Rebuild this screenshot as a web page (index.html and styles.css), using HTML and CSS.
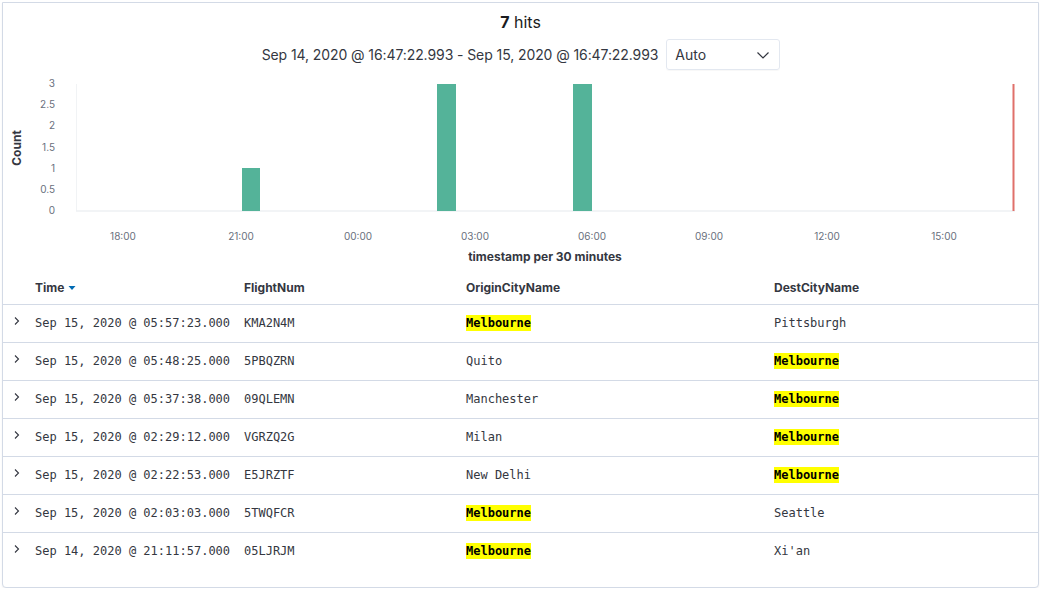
FILE: index.html
```html
<!DOCTYPE html>
<html>
<head>
<meta charset="utf-8">
<link rel="stylesheet" href="styles.css">
</head>
<body>
<div class="panel">
  <div class="hits"><strong>7</strong> hits</div>
  <div class="range">
    <span class="range-text">Sep 14, 2020 @ 16:47:22.993 - Sep 15, 2020 @ 16:47:22.993</span>
    <div class="select">
      <span>Auto</span>
      <svg class="caret" width="14" height="10" viewBox="0 0 14 10"><path d="M1.5 2.5 L7 8 L12.5 2.5" fill="none" stroke="#343741" stroke-width="1.2"/></svg>
    </div>
  </div>
  <svg class="chart" width="1035" height="198" viewBox="3 70 1035 198">
    <text class="ylabel" x="55" y="87">3</text>
    <text class="ylabel" x="55" y="108">2.5</text>
    <text class="ylabel" x="55" y="129">2</text>
    <text class="ylabel" x="55" y="151">1.5</text>
    <text class="ylabel" x="55" y="172">1</text>
    <text class="ylabel" x="55" y="193">0.5</text>
    <text class="ylabel" x="55" y="214">0</text>
    <text class="ytitle" transform="translate(21 148) rotate(-90)">Count</text>
    <line x1="76.5" y1="84" x2="76.5" y2="211" stroke="#F1F3F5" stroke-width="1"/>
    <line x1="76" y1="211" x2="1015" y2="211" stroke="#EEF0F3" stroke-width="1.5"/>
    <rect x="242" y="168" width="18" height="43" fill="#54B399"/>
    <rect x="437" y="84" width="19" height="127" fill="#54B399"/>
    <rect x="573" y="84" width="19" height="127" fill="#54B399"/>
    <line x1="1013.5" y1="84" x2="1013.5" y2="211" stroke="#E0706A" stroke-width="2"/>
    <text class="xlabel" x="123" y="240">18:00</text>
    <text class="xlabel" x="241" y="240">21:00</text>
    <text class="xlabel" x="358" y="240">00:00</text>
    <text class="xlabel" x="475" y="240">03:00</text>
    <text class="xlabel" x="592" y="240">06:00</text>
    <text class="xlabel" x="709" y="240">09:00</text>
    <text class="xlabel" x="827" y="240">12:00</text>
    <text class="xlabel" x="944" y="240">15:00</text>
    <text class="xtitle" x="545" y="261">timestamp per 30 minutes</text>
  </svg>
  <table class="docs">
    <thead>
      <tr>
        <th class="c-exp"></th>
        <th class="c-time">Time <svg class="sort" width="8" height="6" viewBox="0 0 8 6"><path d="M0.5 1 L7.5 1 L4 5 Z" fill="#006BB4"/></svg></th>
        <th class="c-flight">FlightNum</th>
        <th class="c-origin">OriginCityName</th>
        <th class="c-dest">DestCityName</th>
      </tr>
    </thead>
    <tbody>
      <tr><td class="c-exp"><svg class="chev" width="8" height="10" viewBox="0 0 8 10"><path d="M2 1.5 L5.5 5 L2 8.5" fill="none" stroke="#343741" stroke-width="1.1"/></svg></td><td>Sep 15, 2020 @ 05:57:23.000</td><td>KMA2N4M</td><td><mark>Melbourne</mark></td><td>Pittsburgh</td></tr>
      <tr><td class="c-exp"><svg class="chev" width="8" height="10" viewBox="0 0 8 10"><path d="M2 1.5 L5.5 5 L2 8.5" fill="none" stroke="#343741" stroke-width="1.1"/></svg></td><td>Sep 15, 2020 @ 05:48:25.000</td><td>5PBQZRN</td><td>Quito</td><td><mark>Melbourne</mark></td></tr>
      <tr><td class="c-exp"><svg class="chev" width="8" height="10" viewBox="0 0 8 10"><path d="M2 1.5 L5.5 5 L2 8.5" fill="none" stroke="#343741" stroke-width="1.1"/></svg></td><td>Sep 15, 2020 @ 05:37:38.000</td><td>09QLEMN</td><td>Manchester</td><td><mark>Melbourne</mark></td></tr>
      <tr><td class="c-exp"><svg class="chev" width="8" height="10" viewBox="0 0 8 10"><path d="M2 1.5 L5.5 5 L2 8.5" fill="none" stroke="#343741" stroke-width="1.1"/></svg></td><td>Sep 15, 2020 @ 02:29:12.000</td><td>VGRZQ2G</td><td>Milan</td><td><mark>Melbourne</mark></td></tr>
      <tr><td class="c-exp"><svg class="chev" width="8" height="10" viewBox="0 0 8 10"><path d="M2 1.5 L5.5 5 L2 8.5" fill="none" stroke="#343741" stroke-width="1.1"/></svg></td><td>Sep 15, 2020 @ 02:22:53.000</td><td>E5JRZTF</td><td>New Delhi</td><td><mark>Melbourne</mark></td></tr>
      <tr><td class="c-exp"><svg class="chev" width="8" height="10" viewBox="0 0 8 10"><path d="M2 1.5 L5.5 5 L2 8.5" fill="none" stroke="#343741" stroke-width="1.1"/></svg></td><td>Sep 15, 2020 @ 02:03:03.000</td><td>5TWQFCR</td><td><mark>Melbourne</mark></td><td>Seattle</td></tr>
      <tr class="last"><td class="c-exp"><svg class="chev" width="8" height="10" viewBox="0 0 8 10"><path d="M2 1.5 L5.5 5 L2 8.5" fill="none" stroke="#343741" stroke-width="1.1"/></svg></td><td>Sep 14, 2020 @ 21:11:57.000</td><td>05LJRJM</td><td><mark>Melbourne</mark></td><td>Xi'an</td></tr>
    </tbody>
  </table>
</div>
</body>
</html>
```
FILE: styles.css
```css
html, body {
  margin: 0;
  padding: 0;
  background: #ffffff;
}
body {
  font-family: Inter, "Noto Sans", sans-serif;
  color: #343741;
}
.panel {
  margin: 2px 0 0 2px;
  width: 1035px;
  height: 584px;
  border: 1px solid #D3DAE6;
  border-radius: 0 0 4px 4px;
  box-shadow: 0 1px 2px rgba(0,0,0,0.05);
  background: #fff;
  overflow: hidden;
}
.hits {
  text-align: center;
  font-size: 16px;
  line-height: 20px;
  margin-top: 9px;
  color: #1a1c21;
}
.hits strong {
  font-weight: 700;
}
.range {
  display: flex;
  justify-content: center;
  align-items: center;
  gap: 8px;
  margin-top: 7px;
  height: 31px;
  padding-left: 1px;
}
.range-text {
  font-size: 14px;
  letter-spacing: -0.09px;
  color: #343741;
}
.select {
  box-sizing: border-box;
  width: 114px;
  height: 31px;
  border: 1px solid #E3E8F0;
  border-radius: 3px;
  display: flex;
  align-items: center;
  justify-content: space-between;
  padding: 0 9px 0 8px;
  font-size: 14px;
  color: #343741;
  box-shadow: 0 1px 1px rgba(0,0,0,0.03);
}
.chart {
  display: block;
}
.ylabel {
  font-family: Inter, sans-serif;
  font-size: 10px;
  fill: #69707D;
  text-anchor: end;
}
.xlabel {
  font-family: Inter, sans-serif;
  font-size: 10px;
  fill: #69707D;
  text-anchor: middle;
}
.ytitle, .xtitle {
  font-family: Inter, sans-serif;
  font-size: 12px;
  font-weight: 700;
  fill: #343741;
  text-anchor: middle;
}
.docs {
  width: 100%;
  border-collapse: collapse;
  margin-top: 2px;
}
.docs th {
  text-align: left;
  font-size: 12px;
  font-weight: 700;
  color: #343741;
  height: 34px;
  padding: 0;
  border-bottom: 1px solid #D3DAE6;
  white-space: nowrap;
}
.docs td {
  font-family: "DejaVu Sans Mono", "Liberation Mono", monospace;
  font-size: 12px;
  color: #343741;
  height: 35px;
  padding: 0 0 2px 0;
  border-bottom: 1px solid #D3DAE6;
  white-space: nowrap;
  vertical-align: middle;
}
.docs tr.last td {
  border-bottom: none;
}
.c-exp {
  width: 32px;
  padding-left: 0;
}
.docs td.c-exp {
  text-align: left;
}
.chev {
  display: block;
  margin-left: 10px;
  margin-top: -4px;
}
.c-time { width: 209px; }
.c-flight { width: 222px; }
.c-origin { width: 308px; }
.sort {
  vertical-align: middle;
  margin-left: 1px;
}
mark {
  background: #FFFF00;
  color: #000;
  font-weight: 700;
  padding: 1px 0;
}
```
